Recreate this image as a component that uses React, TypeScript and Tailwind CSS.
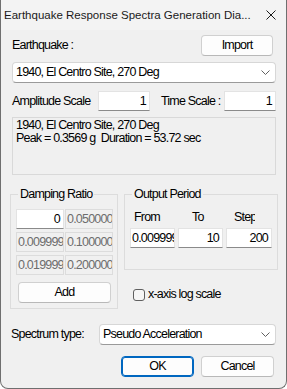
import { ReactNode } from 'react';

// cell used by the damping grid and output period edits
function Edit({ value, w, align = 'right', off = false }: { value: string; w: string; align?: 'left' | 'right'; off?: boolean }) {
  return (
    <div
      className={`${w} h-[20px] flex items-center overflow-hidden whitespace-nowrap border ${
        off
          ? 'bg-[#f0f0f0] border-[#dcdcdc] text-[#6d6d6d]'
          : 'bg-white border-[#e3e3e3] border-b-[#8a8a8a] text-black'
      } ${align === 'right' ? 'justify-end pr-[3px]' : 'justify-start pl-[1px]'}`}
    >
      <span className="shrink-0">{value}</span>
    </div>
  );
}

function Button({ children, w, primary = false }: { children: ReactNode; w: string; primary?: boolean }) {
  return (
    <button
      type="button"
      className={`${w} h-[21px] flex items-center justify-center rounded-[4px] bg-[#fdfdfd] border ${
        primary ? 'border-[#0067c0] shadow-[inset_0_0_0_1px_#0067c0]' : 'border-[#d0d0d0] border-b-[#b8b8b8]'
      }`}
    >
      {children}
    </button>
  );
}

function Combo({ value, w }: { value: string; w: string }) {
  return (
    <div className={`${w} h-[21px] flex items-center justify-between pl-[3px] pr-[5px] bg-white border border-[#d7d7d7] border-b-[#9a9a9a] rounded-[4px]`}>
      <span>{value}</span>
      <svg width="9" height="6" viewBox="0 0 9 6">
        <polyline points="0.5,0.5 4.5,4.5 8.5,0.5" fill="none" stroke="#606060" strokeWidth="1" />
      </svg>
    </div>
  );
}

export default function App() {
  return (
    <div className="w-[287px] h-[389px] flex flex-col bg-[#f0f0f0] border-x border-b border-[#6f6f6f] rounded-b-[8px] overflow-hidden whitespace-nowrap text-[12.5px] tracking-[-0.8px] leading-[15px] text-black font-['Liberation_Sans',Arial,sans-serif]">
      {/* title bar */}
      <div className="h-[30px] shrink-0 flex items-center justify-between pl-[3px] pr-[10px] bg-[#f3f3f3]">
        <span className="text-[11.5px] tracking-normal text-[#1a1a1a]">
          Earthquake Response Spectra Generation Dia...
        </span>
        <svg width="10" height="10" viewBox="0 0 10 10">
          <path d="M0.5 0.5 L9.5 9.5 M9.5 0.5 L0.5 9.5" stroke="#1a1a1a" strokeWidth="1" />
        </svg>
      </div>

      <div className="flex flex-col pl-[11px] pr-[10px]">
        <div className="mt-[5px] h-[21px] flex items-center justify-between pr-[3px]">
          <span>Earthquake :</span>
          <Button w="w-[72px]">Import</Button>
        </div>

        <div className="mt-[6px]">
          <Combo value="1940, El Centro Site, 270 Deg" w="w-[264px]" />
        </div>

        <div className="mt-[8px] h-[20px] flex items-center">
          <span className="w-[86px]">Amplitude Scale</span>
          <Edit value="1" w="w-[52px]" />
          <span className="ml-[11px] w-[63px]">Time Scale :</span>
          <Edit value="1" w="w-[52px]" />
        </div>

        <div className="mt-[6px] h-[58px] w-[264px] bg-[#f0f0f0] border border-[#d9d9d9] pl-[3px] pt-[1px] leading-[13px]">
          <div>1940, El Centro Site, 270 Deg</div>
          <div>Peak = 0.3569 g&nbsp; Duration = 53.72 sec</div>
        </div>

        <div className="mt-[12px] flex">
          {/* Damping Ratio */}
          <fieldset className="-ml-[2px] w-[108px] border border-[#dcdcdc] pl-[5px] pr-[4px] pb-[5px]">
            <legend className="ml-[2px] px-[2px]">Damping Ratio</legend>
            <div className="mt-[7px] grid grid-cols-[48px_48px] gap-x-[1px] gap-y-[3px]">
              <Edit value="0" w="w-[48px]" />
              <Edit value="0.0500000007450581" w="w-[48px]" align="left" off />
              <Edit value="0.00999999977648258" w="w-[48px]" align="left" off />
              <Edit value="0.100000001490116" w="w-[48px]" align="left" off />
              <Edit value="0.0199999995529652" w="w-[48px]" align="left" off />
              <Edit value="0.200000002980232" w="w-[48px]" align="left" off />
            </div>
            <div className="mt-[7px] ml-[2px]">
              <Button w="w-[93px]">Add</Button>
            </div>
          </fieldset>

          <div className="ml-[6px] flex flex-col">
            {/* Output Period */}
            <fieldset className="w-[154px] border border-[#dcdcdc] pl-[5px] pr-[5px] pb-[21px]">
              <legend className="ml-[2px] px-[2px]">Output Period</legend>
              <div className="mt-[8px] h-[15px] flex">
                <span className="w-[48px] pl-[4px]">From</span>
                <span className="w-[48px] pl-[14px]">To</span>
                <span className="pl-[8px] w-[29px] overflow-hidden">Step</span>
              </div>
              <div className="mt-[3px] flex gap-[3px]">
                <Edit value="0.00999999977648258" w="w-[45px]" align="left" />
                <Edit value="10" w="w-[45px]" />
                <Edit value="200" w="w-[46px]" />
              </div>
            </fieldset>

            <label className="mt-[18px] ml-[9px] h-[13px] flex items-center gap-[3px]">
              <span className="w-[12px] h-[12px] rounded-[3px] border border-[#5f5f5f] bg-[#f6f6f6]" />
              <span>x-axis log scale</span>
            </label>
          </div>
        </div>

        <div className="mt-[15px] -ml-[1px] h-[21px] flex items-center">
          <span className="w-[88px]">Spectrum type:</span>
          <Combo value="Pseudo Acceleration" w="w-[177px]" />
        </div>

        <div className="mt-[11px] flex justify-end gap-[7px] pr-[2px]">
          <Button w="w-[73px]" primary>OK</Button>
          <Button w="w-[73px]">Cancel</Button>
        </div>
      </div>
    </div>
  );
}
